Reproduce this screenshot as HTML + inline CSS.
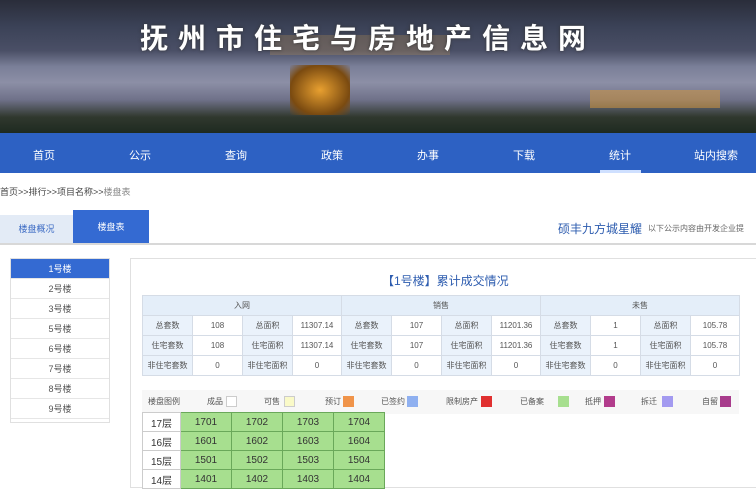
<!DOCTYPE html><html><head><meta charset="utf-8"><style>
*{margin:0;padding:0;box-sizing:border-box}
body{width:756px;height:479px;overflow:hidden;background:#fff;font-family:"Liberation Sans","Noto Sans CJK SC",sans-serif;position:relative;font-size:10px;color:#555}
.abs{position:absolute}
#ban{left:0;top:0;width:756px;height:133px;background:linear-gradient(180deg,#2a2d3a 0%,#3b4257 20%,#4a4f66 38%,#7a7f98 50%,#8c8fa6 62%,#6f7189 75%,#30382e 88%,#1e2a20 100%)}
#title{left:140px;top:17px;font-size:28px;color:#fff;letter-spacing:10px;font-weight:bold;text-shadow:0 0 3px #333;white-space:nowrap}
#nav{left:0;top:133px;width:756px;height:40px;background:#2d61c3}
.ni{position:absolute;top:14px;color:#fff;font-size:11px;transform:translateX(-50%);white-space:nowrap}
#bc{left:0;top:185px;font-size:9px;color:#444}
.tab{top:210px;height:33px;line-height:36px;text-align:center;font-size:9px}
table{border-collapse:collapse;table-layout:fixed}
#st td{border:1px solid #d5dce6;height:20px;text-align:center;font-size:8px;color:#555;white-space:nowrap;overflow:hidden}
#st td.h{background:#e4eef9}
#st td.l{background:#eaf2fb}
.side div{height:20px;line-height:20px;text-align:center;border-bottom:1px solid #e6e6e6;font-size:9px;color:#555}
.lg{position:absolute;top:396px;font-size:8px;color:#555}
.bx{position:absolute;top:396px;width:11px;height:11px;border:1px solid #ccc}
#fl td{border:1px solid #6aa85a;height:19px;text-align:center;font-size:10px;color:#333;background:#a7df8f;width:51px}
#fl td.f{background:#fff;border-color:#ccc;width:38px}
</style></head><body>
<div id="ban" class="abs"></div>
<div class="abs" style="left:270px;top:35px;width:180px;height:20px;background:rgba(200,150,80,.25)"></div>
<div class="abs" style="left:290px;top:65px;width:60px;height:50px;background:radial-gradient(#e8a030,#7a4a10 70%,transparent)"></div>
<div class="abs" style="left:590px;top:90px;width:130px;height:18px;background:rgba(210,150,60,.55)"></div>
<div id="title" class="abs">抚州市住宅与房地产信息网</div>
<div id="nav" class="abs">
<span class="ni" style="left:44px">首页</span><span class="ni" style="left:140px">公示</span><span class="ni" style="left:236px">查询</span><span class="ni" style="left:332px">政策</span><span class="ni" style="left:428px">办事</span><span class="ni" style="left:524px">下载</span><span class="ni" style="left:620px">统计</span><span class="ni" style="left:716px">站内搜索</span>
<div class="abs" style="left:600px;top:37px;width:41px;height:3px;background:#cfe0ff"></div></div>
<div id="bc" class="abs">首页&gt;&gt;排行&gt;&gt;项目名称&gt;&gt;<span style="color:#888">楼盘表</span></div>
<div class="abs tab" style="left:0;width:73px;background:#e3ebf6;color:#3c6bc4;top:215px;height:28px;line-height:28px">楼盘概况</div>
<div class="abs tab" style="left:73px;width:76px;background:#346ad2;color:#fff;line-height:34px">楼盘表</div>
<div class="abs" style="left:0;top:243px;width:756px;height:2px;background:#d8d8d8"></div>
<div class="abs" style="left:558px;top:220px;font-size:12px;color:#2d5caf">硕丰九方城星耀</div>
<div class="abs" style="left:648px;top:223px;font-size:8px;color:#666;white-space:nowrap">以下公示内容由开发企业提</div>
<div class="abs side" style="left:10px;top:258px;width:100px;border:1px solid #e0e0e0;height:165px">
<div style="background:#346ad2;color:#fff">1号楼</div><div>2号楼</div><div>3号楼</div><div>5号楼</div><div>6号楼</div><div>7号楼</div><div>8号楼</div><div>9号楼</div></div>
<div class="abs" style="left:130px;top:258px;width:630px;height:230px;border:1px solid #e0e0e0"></div>
<div class="abs" style="left:382px;top:272px;font-size:12px;color:#2d5caf">【1号楼】累计成交情况</div>
<table id="st" class="abs" style="left:142px;top:295px;width:597px">
<colgroup><col style="width:50px"><col style="width:50px"><col style="width:50px"><col style="width:49px"><col style="width:50px"><col style="width:50px"><col style="width:50px"><col style="width:49px"><col style="width:50px"><col style="width:50px"><col style="width:50px"><col style="width:49px"></colgroup>
<tr><td class="h" colspan="4">入网</td><td class="h" colspan="4">销售</td><td class="h" colspan="4">未售</td></tr>
<tr><td class="l">总套数</td><td>108</td><td class="l">总面积</td><td>11307.14</td><td class="l">总套数</td><td>107</td><td class="l">总面积</td><td>11201.36</td><td class="l">总套数</td><td>1</td><td class="l">总面积</td><td>105.78</td></tr>
<tr><td class="l">住宅套数</td><td>108</td><td class="l">住宅面积</td><td>11307.14</td><td class="l">住宅套数</td><td>107</td><td class="l">住宅面积</td><td>11201.36</td><td class="l">住宅套数</td><td>1</td><td class="l">住宅面积</td><td>105.78</td></tr>
<tr><td class="l">非住宅套数</td><td>0</td><td class="l">非住宅面积</td><td>0</td><td class="l">非住宅套数</td><td>0</td><td class="l">非住宅面积</td><td>0</td><td class="l">非住宅套数</td><td>0</td><td class="l">非住宅面积</td><td>0</td></tr>
</table>
<div class="abs" style="left:142px;top:390px;width:597px;height:24px;background:#f7f7f7"></div>
<span class="lg" style="left:148px">楼盘图例</span>
<span class="lg" style="left:207px">成品</span><span class="bx" style="left:226px;background:#fff"></span>
<span class="lg" style="left:264px">可售</span><span class="bx" style="left:284px;background:#fafac8"></span>
<span class="lg" style="left:325px">预订</span><span class="bx" style="left:343px;background:#f0944a;border-color:#f0944a"></span>
<span class="lg" style="left:381px">已签约</span><span class="bx" style="left:407px;background:#8fb0f0;border-color:#8fb0f0"></span>
<span class="lg" style="left:446px">限制房产</span><span class="bx" style="left:481px;background:#e03030;border-color:#e03030"></span>
<span class="lg" style="left:520px">已备案</span><span class="bx" style="left:558px;background:#a7df8f;border-color:#a7df8f"></span>
<span class="lg" style="left:585px">抵押</span><span class="bx" style="left:604px;background:#b23c8c;border-color:#b23c8c"></span>
<span class="lg" style="left:641px">拆迁</span><span class="bx" style="left:662px;background:#a39af0;border-color:#a39af0"></span>
<span class="lg" style="left:702px">自留</span><span class="bx" style="left:720px;background:#a83c8c;border-color:#a83c8c"></span>
<table id="fl" class="abs" style="left:142px;top:412px">
<tr><td class="f">17层</td><td>1701</td><td>1702</td><td>1703</td><td>1704</td></tr>
<tr><td class="f">16层</td><td>1601</td><td>1602</td><td>1603</td><td>1604</td></tr>
<tr><td class="f">15层</td><td>1501</td><td>1502</td><td>1503</td><td>1504</td></tr>
<tr><td class="f">14层</td><td>1401</td><td>1402</td><td>1403</td><td>1404</td></tr>
</table>
</body></html>
